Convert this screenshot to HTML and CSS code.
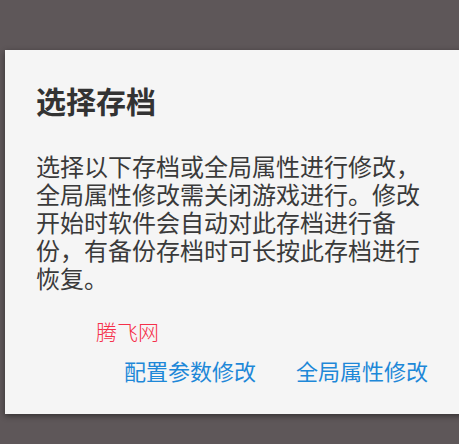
FILE: index.html
```html
<!DOCTYPE html>
<html lang="zh-CN">
<head>
<meta charset="utf-8">
<title>选择存档</title>
<link rel="stylesheet" href="styles.css">
</head>
<body>
<div class="dialog">
  <h1 class="dialog-title">选择存档</h1>
  <p class="dialog-message">选择以下存档或全局属性进行修改，全局属性修改需关闭游戏进行。修改开始时软件会自动对此存档进行备份，有备份存档时可长按此存档进行恢复。</p>
  <div class="watermark">腾飞网</div>
  <div class="dialog-actions">
    <span class="action">配置参数修改</span>
    <span class="action">全局属性修改</span>
  </div>
</div>
</body>
</html>
```
FILE: styles.css
```css
html, body {
  margin: 0;
  padding: 0;
}
body {
  background: #5e5759;
  width: 459px;
  height: 444px;
  overflow: hidden;
  font-family: "Noto Sans CJK SC", "Noto Sans", sans-serif;
}
.dialog {
  margin: 50px 0 0 5px;
  width: 460px;
  height: 364px;
  box-sizing: border-box;
  padding: 32px 37px 0 31px;
  background: #f5f5f5;
  box-shadow: 0 2px 6px rgba(0, 0, 0, 0.45);
}
.dialog-title {
  margin: 0;
  font-size: 30px;
  line-height: 36px;
  font-weight: 700;
  color: #333333;
}
.dialog-message {
  margin: 34px 0 0 0;
  font-size: 24px;
  line-height: 28px;
  color: #3a3a3a;
}
.watermark {
  margin: 27px 0 0 60px;
  font-size: 21px;
  line-height: 24px;
  color: #f5304a;
  font-weight: 300;
}
.dialog-actions {
  margin-top: 15px;
  display: flex;
  justify-content: flex-end;
  gap: 40px;
}
.action {
  font-size: 22px;
  line-height: 24px;
  color: #1e88d8;
}
```
